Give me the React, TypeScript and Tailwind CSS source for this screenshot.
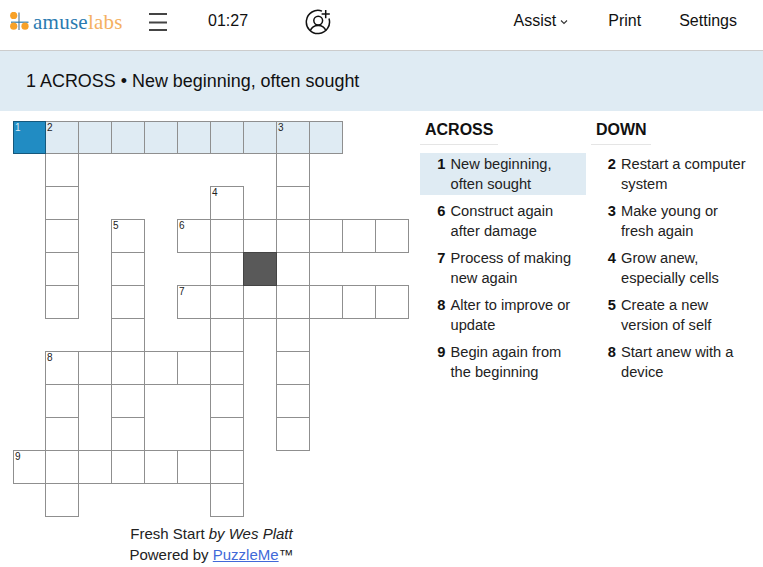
const spec: [number, number[]][] = [
  [0, [0,1,2,3,4,5,6,7,8,9]],
  [1, [1,8]],
  [2, [1,6,8]],
  [3, [1,3,5,6,7,8,9,10,11]],
  [4, [1,3,6,7,8]],
  [5, [1,3,5,6,7,8,9,10,11]],
  [6, [3,6,8]],
  [7, [1,2,3,4,5,6,8]],
  [8, [1,3,6,8]],
  [9, [1,3,6,8]],
  [10, [0,1,2,3,4,5,6]],
  [11, [1,6]],
];
const nums: Record<string, string> = { "0-0": "1", "0-1": "2", "0-8": "3", "2-6": "4", "3-3": "5", "3-5": "6", "5-5": "7", "7-1": "8", "10-0": "9" };

function Cell({ r, c }: { r: number; c: number }) {
  const on = spec[r][1].includes(c);
  if (!on) return <div />;
  const active = r === 0 && c === 0;
  const word = r === 0 && c > 0;
  const black = r === 4 && c === 7;
  const n = nums[`${r}-${c}`];
  return (
    <div className={`relative border ${c === 0 ? "ml-[1px] w-[33px]" : "w-[34px]"} ${r === 0 ? "mt-[1px] h-[33px]" : "h-[34px]"} ${active ? "bg-[#218cc3] border-[#15587c] z-10" : black ? "bg-[#595959] border-[#444444] z-10" : word ? "bg-[#dfebf3] border-[#8f8f8f]" : "bg-white border-[#8f8f8f]"}`}>
      {n && <span className={`absolute left-[1px] top-[1px] text-[10px] leading-[10px] ${active ? "text-[#dcecf5]" : "text-[#222222]"}`}>{n}</span>}
    </div>
  );
}

function Clue({ n, a, b, on, shift }: { n: string; a: string; b: string; on?: boolean; shift?: boolean }) {
  return (
    <div className={`flex h-[42px] py-[1px] ${shift ? "pl-[0.5px]" : ""} ${on ? "bg-[#dfebf3]" : ""}`}>
      <span className="w-[25px] text-right font-bold text-[14.67px] leading-[20px] text-[#111111]">{n}</span>
      <span className="ml-[5px] text-[14.67px] leading-[20px] text-[#222222]">{a}<br />{b}</span>
    </div>
  );
}

const across = [["1","New beginning,","often sought"],["6","Construct again","after damage"],["7","Process of making","new again"],["8","Alter to improve or","update"],["9","Begin again from","the beginning"]];
const down = [["2","Restart a computer","system"],["3","Make young or","fresh again"],["4","Grow anew,","especially cells"],["5","Create a new","version of self"],["8","Start anew with a","device"]];

export default function App() {
  return (
    <div className="w-[763px] h-[567px] overflow-hidden bg-white font-['Liberation_Sans',Arial,sans-serif] text-[#111111]">
      <header className="h-[51px] pb-[7px] border-b border-[#cccccc] flex items-center">
        <div className="flex items-center ml-[10px] w-[113px]">
          <svg width="20" height="20" viewBox="0 0 20 20" className="shrink-0">
            <line x1="9" y1="0.5" x2="9" y2="18" stroke="#5f7f95" strokeWidth="1.2" />
            <line x1="1" y1="10.2" x2="18.5" y2="10.2" stroke="#2a7ab0" strokeWidth="1.2" />
            <circle cx="3.7" cy="3.4" r="3.6" fill="#f7a128" />
            <circle cx="3.7" cy="14.2" r="3.6" fill="#f7a128" />
            <circle cx="15" cy="14.2" r="3.6" fill="#f7a128" />
          </svg>
          <span className="ml-[3px] mt-[2px] font-['Liberation_Serif',serif] text-[21px] leading-none tracking-[0.25px] text-[#2a7ab0]">amuse<span className="text-[#f5b062]">labs</span></span>
        </div>
        <svg width="18" height="18" viewBox="0 0 18 18" className="ml-[26px]">
          <path d="M0 1h18M0 9.5h18M0 17h18" stroke="#444444" strokeWidth="1.8" />
        </svg>
        <span className="ml-[41px] text-[16px] text-[#111111] -mt-[2px]">01:27</span>
        <svg width="26" height="26" viewBox="0 0 26 26" fill="none" stroke="#111111" strokeWidth="1.5" className="ml-[57px]">
          <path d="M17 2.1A11.6 11.6 0 1 0 24 9.5" />
          <circle cx="13.2" cy="11.6" r="4.4" />
          <path d="M5.3 21.8c1.3-3.6 4.2-5.2 7.9-5.2s6.4 1.6 7.7 5.2" />
          <path d="M20.7 1v8.2M16.6 5.1h8.2" />
        </svg>
        <nav className="ml-auto flex items-center text-[16px] text-[#111111] -mt-[2px]">
          <span className="flex items-center">Assist<svg width="8" height="6" viewBox="0 0 8 6" fill="none" stroke="#333333" strokeWidth="1.1" className="ml-[4px] mt-[2px]"><path d="M1 1.5l3 3 3-3" /></svg></span>
          <span className="ml-[40px]">Print</span>
          <span className="ml-[38px] mr-[26px]">Settings</span>
        </nav>
      </header>
      <div className="h-[60px] bg-[#dfebf3] flex items-center pl-[26px] text-[17.95px] text-[#111111]">1 ACROSS • New beginning, often sought</div>
      <div className="flex">
        <div className="ml-[12px] mt-[9px] w-[398px]">
          <div className="grid grid-cols-[repeat(12,33px)] grid-rows-[repeat(12,33px)]">
            {spec.map(([r]) => Array.from({ length: 12 }, (_, c) => <Cell key={`${r}-${c}`} r={r} c={c} />))}
          </div>
          <div className="mt-[7px] ml-[-12px] w-[423px] text-center text-[15px] leading-[21px] text-[#222222]">
            <div>Fresh Start <i>by Wes Platt</i></div>
            <div>Powered by <span className="text-[#4169d8] underline">PuzzleMe</span>™</div>
          </div>
        </div>
        <div className="flex ml-[10px] mt-[8px]">
          <section className="w-[166px]">
            <h2 className="w-[78px] h-[26px] pl-[5px] border-b border-[#e5e5e5] font-bold text-[16px] leading-[22px] text-[#111111]">ACROSS</h2>
            <div className="mt-[8px] flex flex-col gap-[5px]">{across.map((x, i) => <Clue key={x[0]} n={x[0]} a={x[1]} b={x[2]} on={i === 0} shift />)}</div>
          </section>
          <section className="w-[166px] ml-[5px]">
            <h2 className="w-[60px] h-[26px] pl-[5px] border-b border-[#e5e5e5] font-bold text-[16px] leading-[22px] text-[#111111]">DOWN</h2>
            <div className="mt-[8px] flex flex-col gap-[5px]">{down.map((x) => <Clue key={x[0]} n={x[0]} a={x[1]} b={x[2]} />)}</div>
          </section>
        </div>
      </div>
    </div>
  );
}
